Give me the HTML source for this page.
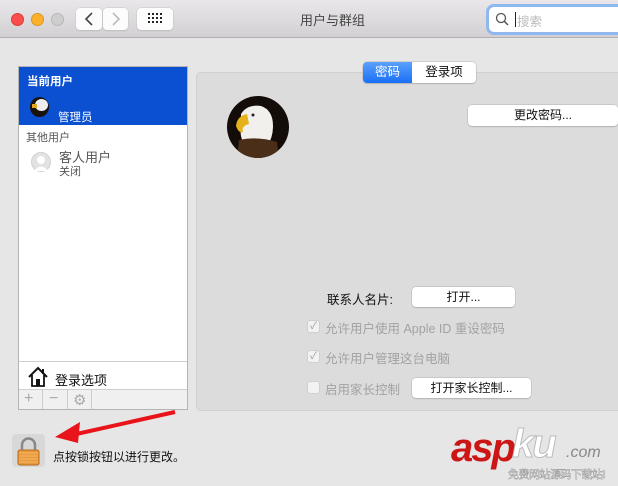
<!DOCTYPE html>
<html><head><meta charset="utf-8"><style>
*{margin:0;padding:0;box-sizing:border-box}
body{width:618px;height:486px;overflow:hidden;background:#e6e6e6;font-family:"Liberation Sans","Noto Sans CJK SC",sans-serif;font-size:12px;color:#222;position:relative}
.a{position:absolute}
.tb{left:0;top:0;width:618px;height:38px;background:linear-gradient(#e9e7e9,#d2d0d2);border-bottom:1px solid #b0aeb0}
.dot{width:13px;height:13px;border-radius:50%;top:13px}
.btn{background:#fcfcfc;border-radius:4px;box-shadow:0 0 0 0.5px #c8c8c8,0 1px 1px rgba(0,0,0,.15)}
.pb{background:#fff;border-radius:4px;box-shadow:0 0 0 0.5px #b5b5b5,0 1px 1px rgba(0,0,0,.2);text-align:center;line-height:20px;font-size:12px;color:#111}
.cb{width:13px;height:13px;border:1px solid #cfcfcf;border-radius:3px;background:#f2f2f2;font-size:10px;line-height:11px;text-align:center;color:#999}
.g{color:#a2a2a2;font-size:12.5px}
</style></head><body>
<div class="a tb"></div>
<div class="a dot" style="left:11px;background:#fc4d4d;border:0.5px solid #de3a3a"></div>
<div class="a dot" style="left:31px;background:#fdb12a;border:0.5px solid #dc9520"></div>
<div class="a dot" style="left:51px;background:#cecece;border:0.5px solid #b7b7b7"></div>
<div class="a btn" style="left:76px;top:8px;width:26px;height:22px"></div>
<div class="a btn" style="left:103px;top:8px;width:25px;height:22px"></div>
<svg class="a" style="left:76px;top:8px" width="52" height="22"><path d="M16 5 L10 11 L16 17" stroke="#444" stroke-width="1.6" fill="none"/><path d="M37 5 L43 11 L37 17" stroke="#bbb" stroke-width="1.6" fill="none"/></svg>
<div class="a btn" style="left:137px;top:8px;width:36px;height:22px"></div>
<svg class="a" style="left:148px;top:13px" width="14" height="12"><g fill="#222"><rect x="0" y="0" width="2" height="2"/><rect x="4" y="0" width="2" height="2"/><rect x="8" y="0" width="2" height="2"/><rect x="12" y="0" width="2" height="2"/><rect x="0" y="4" width="2" height="2"/><rect x="4" y="4" width="2" height="2"/><rect x="8" y="4" width="2" height="2"/><rect x="12" y="4" width="2" height="2"/><rect x="0" y="8" width="2" height="2"/><rect x="4" y="8" width="2" height="2"/><rect x="8" y="8" width="2" height="2"/><rect x="12" y="8" width="2" height="2"/></g></svg>
<div class="a" style="left:300px;top:10px;font-size:13px;color:#444">用户与群组</div>
<div class="a" style="left:489px;top:7px;width:135px;height:25px;background:#fff;border-radius:5px;box-shadow:0 0 0 3px #8fb8ee,0 0 0 1px #6c9fe3"></div>
<svg class="a" style="left:495px;top:12px" width="14" height="14"><circle cx="6" cy="6" r="4.5" stroke="#555" stroke-width="1.3" fill="none"/><path d="M9.3 9.3 L13 13" stroke="#555" stroke-width="1.5"/></svg>
<div class="a" style="left:515px;top:12px;width:1px;height:15px;background:#222"></div>
<div class="a" style="left:517px;top:11px;color:#bbb;font-size:12.5px">搜索</div>

<div class="a" style="left:18px;top:66px;width:170px;height:344px;background:#fff;border:1px solid #b4b4b4"></div>
<div class="a" style="left:19px;top:67px;width:168px;height:58px;background:#0b50d1"></div>
<div class="a" style="left:27px;top:73px;color:#fff;font-size:11.5px;font-weight:bold">当前用户</div>
<div class="a" style="left:30px;top:97px;width:19px;height:20px;border-radius:50%;background:#1a120c;overflow:hidden"><div style="position:absolute;left:5px;top:2px;width:13px;height:12px;border-radius:50%;background:#eee"></div><div style="position:absolute;left:2px;top:7px;width:5px;height:4px;background:#e0a820"></div></div>
<div class="a" style="left:58px;top:109px;color:#fff;font-size:11.5px">管理员</div>
<div class="a" style="left:26px;top:129px;color:#555;font-size:11px">其他用户</div>
<div class="a" style="left:31px;top:152px;width:20px;height:20px;border-radius:50%;background:#e2e2e2;border:1px solid #d2d2d2"></div>
<svg class="a" style="left:31px;top:152px" width="20" height="20"><circle cx="10" cy="8" r="4" fill="#fff"/><path d="M3 19 Q10 10 17 19Z" fill="#fff"/></svg>
<div class="a" style="left:59px;top:147px;color:#555;font-size:13px">客人用户</div>
<div class="a" style="left:59px;top:163px;color:#555;font-size:11px">关闭</div>
<div class="a" style="left:19px;top:361px;width:168px;height:1px;background:#cfcfcf"></div>
<svg class="a" style="left:27px;top:366px" width="22" height="22"><path d="M2 11 L11 2 L20 11" stroke="#111" stroke-width="2" fill="none"/><path d="M5 9 V20 H17 V9" stroke="#111" stroke-width="1.8" fill="none"/><rect x="9" y="13" width="4" height="7" fill="#111"/><rect x="15" y="3" width="2" height="5" fill="#111"/></svg>
<div class="a" style="left:55px;top:370px;font-size:13px;color:#111">登录选项</div>
<div class="a" style="left:19px;top:389px;width:168px;height:20px;background:#f0f0f0;border-top:1px solid #cfcfcf"></div>
<div class="a" style="left:42px;top:390px;width:1px;height:19px;background:#ccc"></div>
<div class="a" style="left:67px;top:390px;width:1px;height:19px;background:#ccc"></div>
<div class="a" style="left:91px;top:390px;width:1px;height:19px;background:#ccc"></div>
<div class="a" style="left:24px;top:390px;color:#aaa;font-size:16px">+</div>
<div class="a" style="left:49px;top:390px;color:#aaa;font-size:16px">−</div>
<div class="a" style="left:73px;top:391px;color:#aaa;font-size:15px">⚙</div>

<div class="a" style="left:196px;top:72px;width:430px;height:339px;background:#dcdcdc;border:1px solid #d0d0d0;border-radius:5px"></div>
<div class="a" style="left:363px;top:62px;width:113px;height:21px;background:#fff;border-radius:4px;box-shadow:0 0 0 0.5px #b5b5b5,0 1px 1px rgba(0,0,0,.2)"></div>
<div class="a" style="left:363px;top:62px;width:49px;height:21px;background:linear-gradient(#5aa1fc,#1a6ff5);border-radius:4px 0 0 4px;color:#fff;text-align:center;line-height:21px;font-size:12.5px">密码</div>
<div class="a" style="left:412px;top:62px;width:64px;height:21px;text-align:center;line-height:21px;font-size:12.5px;color:#111">登录项</div>
<svg class="a" style="left:227px;top:96px" width="62" height="62"><defs><clipPath id="c"><ellipse cx="31" cy="31" rx="31" ry="31"/></clipPath></defs><g clip-path="url(#c)"><rect width="62" height="62" fill="#140c08"/><path d="M14 18 Q20 8 34 10 Q46 14 46 30 Q46 42 40 50 L18 50 Q12 40 14 30Z" fill="#f2f0ec"/><path d="M12 44 Q30 40 50 46 L52 62 L10 62Z" fill="#4a2e18"/><path d="M20 18 Q10 20 9 30 Q12 38 16 36 Q14 30 22 28Z" fill="#e6b21c"/><circle cx="26" cy="19" r="1.5" fill="#222"/></g></svg>
<div class="a pb" style="left:468px;top:105px;width:150px;height:21px">更改密码...</div>
<div class="a" style="left:327px;top:289px;font-size:12.5px;color:#111">联系人名片:</div>
<div class="a pb" style="left:412px;top:287px;width:103px;height:20px">打开...</div>
<div class="a cb" style="left:307px;top:320px">✓</div>
<div class="a g" style="left:325px;top:318px">允许用户使用 Apple ID 重设密码</div>
<div class="a cb" style="left:307px;top:350px">✓</div>
<div class="a g" style="left:325px;top:348px">允许用户管理这台电脑</div>
<div class="a cb" style="left:307px;top:381px"></div>
<div class="a g" style="left:325px;top:379px">启用家长控制</div>
<div class="a pb" style="left:412px;top:378px;width:119px;height:20px">打开家长控制...</div>

<div class="a" style="left:12px;top:434px;width:33px;height:33px;background:#d8d8d8;border-radius:4px"></div>
<svg class="a" style="left:12px;top:434px" width="33" height="33"><path d="M10 17 V11 A6.5 6.5 0 0 1 23 11 V17" stroke="#888" stroke-width="2.5" fill="none"/><rect x="6" y="16" width="21" height="15" rx="2" fill="#e99a3a" stroke="#b56a1a"/><g stroke="#f6c27a" stroke-width="0.8"><path d="M7 19H26M7 22H26M7 25H26M7 28H26"/></g></svg>
<div class="a" style="left:53px;top:448px;font-size:12px;color:#111">点按锁按钮以进行更改。</div>
<svg class="a" style="left:50px;top:400px" width="140" height="45"><path d="M125 12 L22 35" stroke="#e8141a" stroke-width="4"/><path d="M5 37 L30 22 L28 43 Z" fill="#e8141a"/></svg>

<div class="a" style="left:451px;top:426px;font-size:40px;font-weight:bold;font-style:italic;color:#cc1515;letter-spacing:-2px;line-height:44px">asp</div>
<div class="a" style="left:512px;top:422px;font-size:40px;font-weight:bold;font-style:italic;color:#fff;-webkit-text-stroke:1px #bbb;letter-spacing:-2px;line-height:44px">ku</div>
<div class="a" style="left:566px;top:444px;font-size:16px;font-style:italic;color:#888">.com</div>
<div class="a" style="left:508px;top:466px;font-size:11px;color:#fff;-webkit-text-stroke:0.4px #888;letter-spacing:-0.5px">免费网站源码下载站!</div>
</body></html>
